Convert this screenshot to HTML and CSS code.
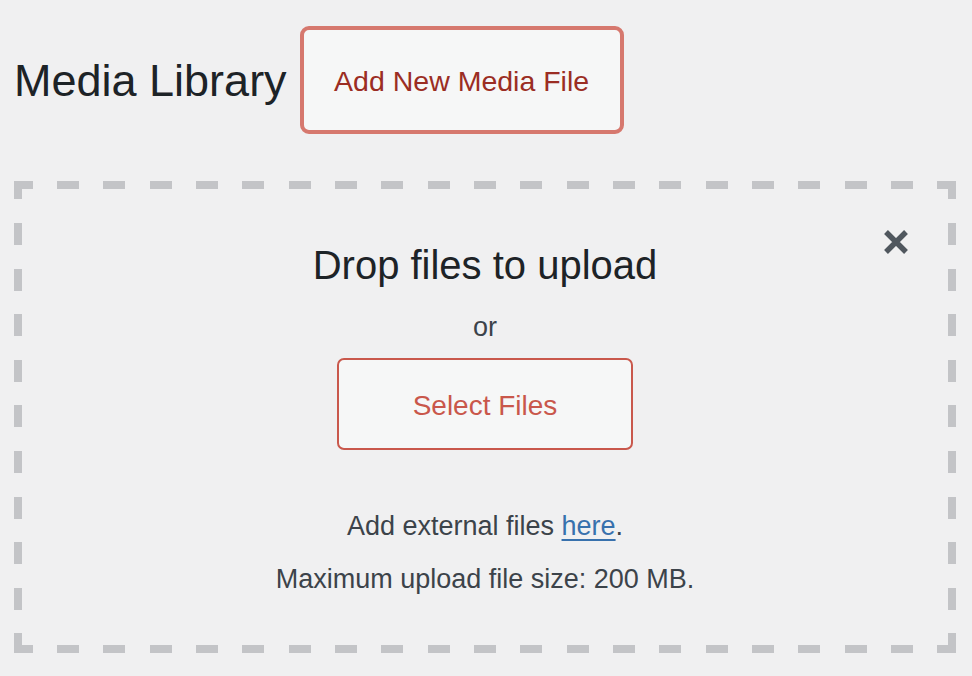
FILE: index.html
```html
<!DOCTYPE html>
<html lang="en">
<head>
    <meta charset="UTF-8">
    <meta name="viewport" content="width=device-width, initial-scale=1.0">
    <title>Media Library</title>
    <link rel="stylesheet" href="styles.css">
</head>
<body>
    <div class="wrap">
        <div class="page-head">
            <h1 class="page-title">Media Library</h1>
            <a class="title-action" href="#">Add New Media File</a>
        </div>
        <div class="uploader">
            <button class="close-btn" type="button" aria-label="Close uploader">
                <svg width="26" height="26" viewBox="0 0 26 26">
                    <path d="M3 3 L23 23 M23 3 L3 23" stroke="#50575e" stroke-width="5.4" fill="none"/>
                </svg>
            </button>
            <div class="upload-ui">
                <h2 class="upload-title">Drop files to upload</h2>
                <p class="upload-or">or</p>
                <button class="select-btn" type="button">Select Files</button>
            </div>
            <div class="upload-info">
                <p class="info-line">Add external files <a href="#">here</a>.</p>
                <p class="info-line">Maximum upload file size: 200 MB.</p>
            </div>
        </div>
    </div>
</body>
</html>
```

FILE: styles.css
```css
body {
    margin: 0;
    padding: 0;
    background-color: #f0f0f1;
    font-family: "Liberation Sans", Arial, sans-serif;
    color: #3c434a;
}
.wrap {
    padding: 26px 16px 0 14px;
}
.page-head {
    display: flex;
    align-items: flex-start;
    gap: 13px;
}
.page-title {
    margin: 28px 0 0;
    font-size: 45px;
    line-height: 54px;
    font-weight: 400;
    color: #1d2327;
}
.title-action {
    box-sizing: border-box;
    width: 324px;
    height: 108px;
    padding-top: 3px;
    display: flex;
    align-items: center;
    justify-content: center;
    border: 4px solid #d6786e;
    border-radius: 9px;
    background-color: #f6f7f7;
    color: #9b2d23;
    font-size: 28.5px;
    text-decoration: none;
}
/* dashed frame drawn with gradients so the dash rhythm matches */
.uploader {
    position: relative;
    margin-top: 47px;
    height: 472px;
    box-sizing: border-box;
    border: 8px solid transparent;
    background-image:
        repeating-linear-gradient(to right, #c3c4c7 0 18.667px, transparent 18.667px 43px, #c3c4c7 43px 46.333px),
        repeating-linear-gradient(to right, #c3c4c7 0 18.667px, transparent 18.667px 43px, #c3c4c7 43px 46.333px),
        repeating-linear-gradient(to bottom, #c3c4c7 0 18.4px, transparent 18.4px 42px, #c3c4c7 42px 45.6px),
        repeating-linear-gradient(to bottom, #c3c4c7 0 18.4px, transparent 18.4px 42px, #c3c4c7 42px 45.6px);
    background-size: 100% 8px, 100% 8px, 8px 100%, 8px 100%;
    background-position: 0 0, 0 100%, 0 0, 100% 0;
    background-repeat: no-repeat;
    background-origin: border-box;
    text-align: center;
}
.close-btn {
    position: absolute;
    top: 40px;
    right: 39px;
    width: 26px;
    height: 26px;
    padding: 0;
    border: none;
    background: none;
    cursor: pointer;
}
.close-btn svg {
    display: block;
}
.upload-ui {
    padding-top: 52px;
}
.upload-title {
    margin: 0;
    font-size: 40px;
    line-height: 48px;
    font-weight: 400;
    color: #1d2327;
}
.upload-or {
    margin: 20px 0 0;
    font-size: 27px;
    line-height: 36px;
}
.select-btn {
    box-sizing: border-box;
    margin-top: 13px;
    width: 296px;
    height: 92px;
    padding: 4px 0 0;
    border: 2px solid #c9584c;
    border-radius: 7px;
    background-color: #f6f7f7;
    color: #c9574b;
    font-family: inherit;
    font-size: 28px;
    cursor: pointer;
}
.upload-info {
    margin-top: 58px;
}
.info-line {
    margin: 0 0 17px;
    font-size: 27px;
    line-height: 36px;
}
.info-line a {
    color: #3871ad;
    text-decoration-thickness: 2px;
    text-underline-offset: 4px;
}
```
